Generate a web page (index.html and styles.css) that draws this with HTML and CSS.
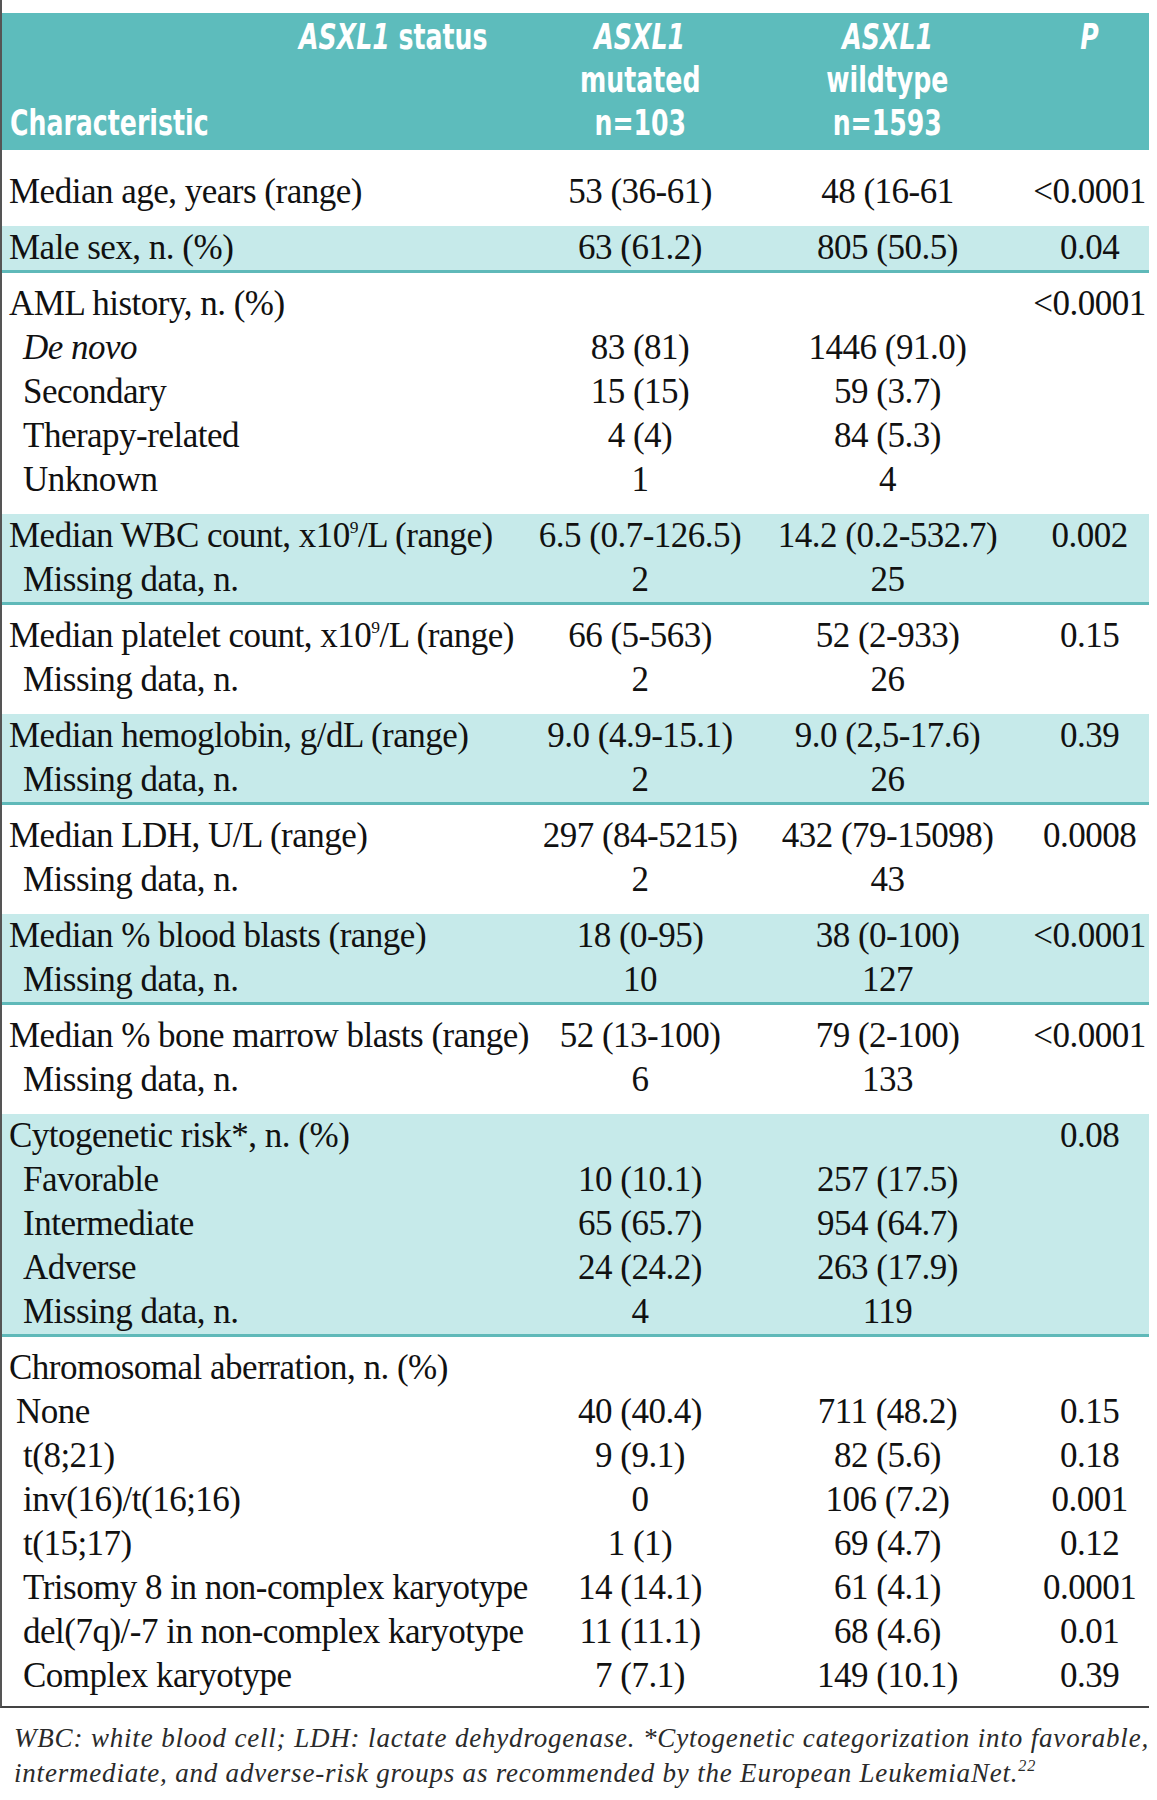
FILE: index.html
```html
<!DOCTYPE html>
<html lang="en">
<head>
<meta charset="utf-8">
<title>ASXL1 characteristics</title>
<link rel="stylesheet" href="styles.css">
</head>
<body>
<div class="page">
  <div class="frame">
    <table class="tbl">
      <colgroup>
        <col class="c-label">
        <col class="c-mut">
        <col class="c-wt">
        <col class="c-p">
      </colgroup>
      <thead>
        <tr>
          <th class="h-label">
            <div class="hl-right"><span class="hl"><i>ASXL1</i> status</span></div>
            <div>&nbsp;</div>
            <div class="hl-left"><span class="hl">Characteristic</span></div>
          </th>
          <th class="h-col">
            <div><span class="hl"><i>ASXL1</i></span></div>
            <div><span class="hl">mutated</span></div>
            <div><span class="hl">n=103</span></div>
          </th>
          <th class="h-col">
            <div><span class="hl"><i>ASXL1</i></span></div>
            <div><span class="hl">wildtype</span></div>
            <div><span class="hl">n=1593</span></div>
          </th>
          <th class="h-col">
            <div><span class="hl"><i>P</i></span></div>
            <div>&nbsp;</div>
            <div>&nbsp;</div>
          </th>
        </tr>
      </thead>
      <tbody class="grp first">
        <tr><td>Median age, years (range)</td><td>53 (36-61)</td><td>48 (16-61</td><td>&lt;0.0001</td></tr>
      </tbody>
      <tbody class="grp band">
        <tr><td>Male sex, n. (%)</td><td>63 (61.2)</td><td>805 (50.5)</td><td>0.04</td></tr>
      </tbody>
      <tbody class="grp">
        <tr><td>AML history, n. (%)</td><td></td><td></td><td>&lt;0.0001</td></tr>
        <tr><td class="sub"><i>De novo</i></td><td>83 (81)</td><td>1446 (91.0)</td><td></td></tr>
        <tr><td class="sub">Secondary</td><td>15 (15)</td><td>59 (3.7)</td><td></td></tr>
        <tr><td class="sub">Therapy-related</td><td>4 (4)</td><td>84 (5.3)</td><td></td></tr>
        <tr><td class="sub">Unknown</td><td>1</td><td>4</td><td></td></tr>
      </tbody>
      <tbody class="grp band">
        <tr><td>Median WBC count, x10<sup>9</sup>/L (range)</td><td>6.5 (0.7-126.5)</td><td>14.2 (0.2-532.7)</td><td>0.002</td></tr>
        <tr><td class="sub">Missing data, n.</td><td>2</td><td>25</td><td></td></tr>
      </tbody>
      <tbody class="grp">
        <tr><td>Median platelet count, x10<sup>9</sup>/L (range)</td><td>66 (5-563)</td><td>52 (2-933)</td><td>0.15</td></tr>
        <tr><td class="sub">Missing data, n.</td><td>2</td><td>26</td><td></td></tr>
      </tbody>
      <tbody class="grp band">
        <tr><td>Median hemoglobin, g/dL (range)</td><td>9.0 (4.9-15.1)</td><td>9.0 (2,5-17.6)</td><td>0.39</td></tr>
        <tr><td class="sub">Missing data, n.</td><td>2</td><td>26</td><td></td></tr>
      </tbody>
      <tbody class="grp">
        <tr><td>Median LDH, U/L (range)</td><td>297 (84-5215)</td><td>432 (79-15098)</td><td>0.0008</td></tr>
        <tr><td class="sub">Missing data, n.</td><td>2</td><td>43</td><td></td></tr>
      </tbody>
      <tbody class="grp band">
        <tr><td>Median % blood blasts (range)</td><td>18 (0-95)</td><td>38 (0-100)</td><td>&lt;0.0001</td></tr>
        <tr><td class="sub">Missing data, n.</td><td>10</td><td>127</td><td></td></tr>
      </tbody>
      <tbody class="grp">
        <tr><td>Median % bone marrow blasts (range)</td><td>52 (13-100)</td><td>79 (2-100)</td><td>&lt;0.0001</td></tr>
        <tr><td class="sub">Missing data, n.</td><td>6</td><td>133</td><td></td></tr>
      </tbody>
      <tbody class="grp band">
        <tr><td>Cytogenetic risk*, n. (%)</td><td></td><td></td><td>0.08</td></tr>
        <tr><td class="sub">Favorable</td><td>10 (10.1)</td><td>257 (17.5)</td><td></td></tr>
        <tr><td class="sub">Intermediate</td><td>65 (65.7)</td><td>954 (64.7)</td><td></td></tr>
        <tr><td class="sub">Adverse</td><td>24 (24.2)</td><td>263 (17.9)</td><td></td></tr>
        <tr><td class="sub">Missing data, n.</td><td>4</td><td>119</td><td></td></tr>
      </tbody>
      <tbody class="grp last">
        <tr><td>Chromosomal aberration, n. (%)</td><td></td><td></td><td></td></tr>
        <tr><td class="sub-s">None</td><td>40 (40.4)</td><td>711 (48.2)</td><td>0.15</td></tr>
        <tr><td class="sub">t(8;21)</td><td>9 (9.1)</td><td>82 (5.6)</td><td>0.18</td></tr>
        <tr><td class="sub">inv(16)/t(16;16)</td><td>0</td><td>106 (7.2)</td><td>0.001</td></tr>
        <tr><td class="sub">t(15;17)</td><td>1 (1)</td><td>69 (4.7)</td><td>0.12</td></tr>
        <tr><td class="sub">Trisomy 8 in non-complex karyotype</td><td>14 (14.1)</td><td>61 (4.1)</td><td>0.0001</td></tr>
        <tr><td class="sub">del(7q)/-7 in non-complex karyotype</td><td>11 (11.1)</td><td>68 (4.6)</td><td>0.01</td></tr>
        <tr><td class="sub">Complex karyotype</td><td>7 (7.1)</td><td>149 (10.1)</td><td>0.39</td></tr>
      </tbody>
    </table>
  </div>
  <div class="foot">
    <span class="foot-l1">WBC: white blood cell; LDH: lactate dehydrogenase. *Cytogenetic categorization into favorable,</span>
    <span class="foot-l2">intermediate, and adverse-risk groups as recommended by the European LeukemiaNet.<sup>22</sup></span>
  </div>
</div>
</body>
</html>
```

FILE: styles.css
```css
html, body {
  margin: 0;
  padding: 0;
  background: #ffffff;
}

.page {
  width: 1149px;
  font-family: "Liberation Serif", "Times New Roman", serif;
  color: #111;
}

.frame {
  border-left: 2px solid #555;
  border-bottom: 2px solid #444;
  padding-top: 13px;
}

.tbl {
  width: 1147px;
  border-collapse: collapse;
  table-layout: fixed;
}

.c-label { width: 533px; }
.c-mut { width: 210px; }
.c-wt { width: 285px; }
.c-p { width: 119px; }

thead th {
  background: #5dbcbc;
  color: #fff;
  font-family: "DejaVu Sans Condensed", "DejaVu Sans", sans-serif;
  font-stretch: condensed;
  font-weight: bold;
  font-size: 35px;
  line-height: 43px;
  padding: 3px 0 5px;
  vertical-align: top;
  white-space: nowrap;
  text-align: center;
}

.hl {
  display: inline-block;
  transform: scaleX(0.8);
  transform-origin: center;
}

.h-label {
  padding-left: 8px;
}

.hl-right {
  text-align: right;
  padding-right: 47px;
}
.hl-right .hl { transform-origin: right center; }

.hl-left {
  text-align: left;
}
.hl-left .hl { transform-origin: left center; }

tbody td {
  font-size: 35px;
  letter-spacing: -0.5px;
  line-height: 44px;
  height: 44px;
  padding: 0;
  white-space: nowrap;
  text-align: center;
  vertical-align: middle;
}

tbody td:first-child {
  text-align: left;
  padding-left: 7px;
}

tbody td.sub {
  padding-left: 21px;
}

tbody td.sub-s {
  padding-left: 14px;
}

sup {
  font-size: 0.5em;
  line-height: 0;
  vertical-align: 0.8em;
}

.grp tr:first-child td { padding-top: 9px; }
.grp tr:last-child td { padding-bottom: 12px; }
.grp.first tr:first-child td { padding-top: 20px; }

.grp.band tr td {
  background: #c6eaea;
  padding-top: 0;
  padding-bottom: 0;
}
.grp.band tr:last-child td {
  border-bottom: 3px solid #5fb9b9;
}

.grp.last tr:last-child td { padding-bottom: 8px; }

.foot {
  padding: 13px 0 0 14px;
  font-style: italic;
  font-size: 27px;
  letter-spacing: 0.8px;
  line-height: 34.5px;
  color: #2a2a2a;
}

.foot-l1 {
  display: block;
  text-align: justify;
  text-align-last: justify;
}

.foot-l2 {
  display: block;
}

.foot sup {
  font-size: 0.6em;
  vertical-align: 0.7em;
}
```
